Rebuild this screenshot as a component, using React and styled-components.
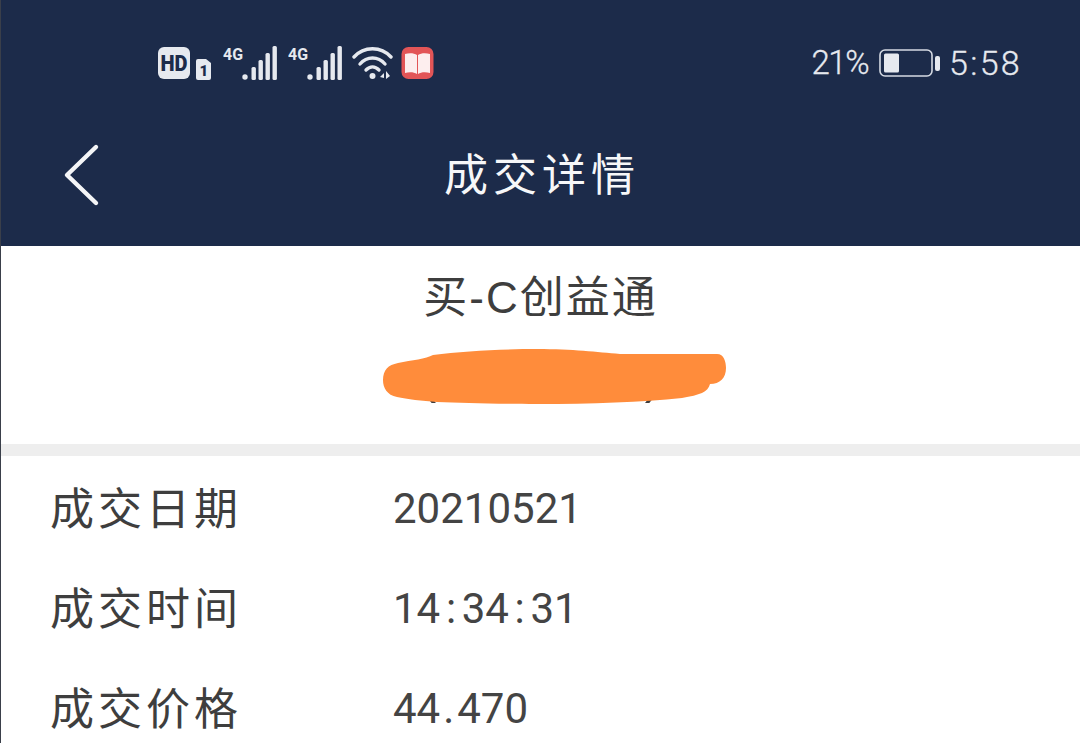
import React from 'react';
import styled, { createGlobalStyle } from 'styled-components';

const CJK = '"Liberation Sans", "Noto Sans CJK SC", sans-serif';

const GlobalStyle = createGlobalStyle`
    html, body {
        margin: 0;
        padding: 0;
        background: #fff;
        font-family: ${CJK};
    }
`;

const Page = styled.div`
    width: 1080px;
    height: 743px;
    overflow: hidden;
    display: flex;
    flex-direction: column;
    background: #fff;
    border-left: 1px solid #3a3f4a;
    box-sizing: border-box;
`;

const Header = styled.header`
    height: 246px;
    flex: none;
    background: #1c2b4a;
    display: flex;
    flex-direction: column;
`;

const StatusBar = styled.div`
    height: 125px;
    box-sizing: border-box;
    padding: 0 58px 0 157px;
    display: flex;
    align-items: center;
    justify-content: space-between;
    color: #e6e9ef;
`;

const StatusGroup = styled.div`
    display: flex;
    align-items: center;
`;

const StatusText = styled.span`
    font-family: "Roboto", "Liberation Sans", sans-serif;
    font-size: ${p => p.$size || 34}px;
    font-weight: 300;
    -webkit-text-stroke: 0.3px #e6e9ef;
    letter-spacing: ${p => p.$spacing || 0}px;
    margin-left: ${p => p.$left || 0}px;
`;

const Icon = styled.svg`
    display: block;
    flex: none;
    margin-left: ${p => p.$left || 0}px;
`;

const NavBar = styled.div`
    flex: 1;
    position: relative;
    display: flex;
    align-items: center;
    justify-content: center;
    padding-bottom: 20px;
`;

const BackIcon = styled.svg`
    position: absolute;
    left: 60px;
    top: 17px;
`;

const NavTitle = styled.h1`
    margin: 0 0 0 3px;
    font-size: 44px;
    line-height: 60px;
    font-weight: 400;
    letter-spacing: 5px;
    color: #f6f7f9;
`;

const Summary = styled.section`
    height: 172px;
    flex: none;
    position: relative;
    display: flex;
    flex-direction: column;
    align-items: center;
    padding-top: 26px;
    border-bottom: 12px solid #eeeeee;
`;

const SummaryTitle = styled.div`
    font-size: 44px;
    line-height: 52px;
    letter-spacing: 2px;
    color: #3e3e3e;
`;

const SummaryCode = styled.div`
    width: 242px;
    margin-top: 26px;
    display: flex;
    justify-content: space-between;
    font-size: 50px;
    line-height: 52px;
    color: #3e3e3e;
`;

const Blob = styled.svg`
    position: absolute;
    left: 381px;
    top: 102px;
`;

const Rows = styled.div`
    display: flex;
    flex-direction: column;
    padding: 2px 0 0 49px;
`;

const Row = styled.div`
    height: 100px;
    display: flex;
    align-items: center;
    color: #3e3e3e;
`;

const Label = styled.div`
    width: 343px;
    font-size: 44px;
    letter-spacing: 4px;
    padding-bottom: 5px;
`;

const Value = styled.div`
    font-family: "Roboto", "Liberation Sans", sans-serif;
    font-size: 42px;
    color: #444444;
`;

const Sep = styled.span`
    display: inline-block;
    text-align: center;
    width: ${p => p.$width}px;
`;

const Signal = ({ left }) => (
    <Icon $left={left} width="56" height="36" viewBox="0 0 56 36">
        <text x="0" y="15" fontSize="17" fontWeight="700" textLength="20" lengthAdjust="spacingAndGlyphs" fontFamily="Roboto, sans-serif" fill="#e6e9ef">4G</text>
        <g fill="#e6e9ef">
            <circle cx="22" cy="32" r="2.7" />
            <rect x="28.5" y="22" width="4.4" height="13" rx="1.5" />
            <rect x="35.5" y="15" width="4.4" height="20" rx="1.5" />
            <rect x="42.5" y="8" width="4.4" height="27" rx="1.5" />
            <rect x="49.5" y="1" width="4.4" height="34" rx="1.5" />
        </g>
    </Icon>
);

const rows = [
    ['成交日期', '20210521'],
    ['成交时间', '14:34:31'],
    ['成交价格', '44.470'],
];

// the colon and the dot are wider in the phone's font than in any installed one
const renderValue = value =>
    value.split(/([:.])/).map((part, i) => {
        if (part === ':') return <Sep key={i} $width={21.5}>:</Sep>;
        if (part === '.') return <Sep key={i} $width={17}>.</Sep>;
        return part;
    });

export default function App() {
    return (
        <Page>
            <GlobalStyle />
            <Header>
                <StatusBar>
                    <StatusGroup>
                        <Icon width="54" height="34" viewBox="0 0 54 34">
                            <rect x="0" y="1" width="32" height="32" rx="6" fill="#e6e9ef" />
                            <text x="2.5" y="24.5" fontSize="22" fontWeight="900" textLength="27" lengthAdjust="spacingAndGlyphs" fontFamily="Roboto, sans-serif" fill="#1c2b4a">HD</text>
                            <path d="M40 13h8l5 4v15a2 2 0 0 1-2 2H40a2 2 0 0 1-2-2V15a2 2 0 0 1 2-2z" fill="#e6e9ef" />
                            <text x="41.5" y="30" fontSize="15" fontWeight="900" fontFamily="Roboto, sans-serif" fill="#1c2b4a">1</text>
                        </Icon>
                        <Signal left={11} />
                        <Signal left={9} />
                        <Icon $left={8} width="42" height="34" viewBox="0 0 42 34">
                            <g fill="none" stroke="#e6e9ef" strokeWidth="3.4" strokeLinecap="round">
                                <path d="M2 11C12 0 29 0 39 11" />
                                <path d="M8 18C15 10 26 10 33 18" />
                                <path d="M14 24C18 20 23 20 27 24" />
                            </g>
                            <circle cx="20.5" cy="30" r="3" fill="#e6e9ef" />
                            <path d="M32 27l-4 4 4 1zM34 25l4 5-4 3z" fill="#e6e9ef" />
                        </Icon>
                        <Icon $left={7} width="34" height="34" viewBox="0 0 34 34">
                            <rect x="0.5" y="1" width="32" height="32" rx="7" fill="#e25557" />
                            <path d="M4 8c4-1 9-1 12 1v19c-3-2-8-2-12-1zM29 8c-4-1-9-1-12 1v19c3-2 8-2 12-1z" fill="#fdeeee" />
                        </Icon>
                    </StatusGroup>
                    <StatusGroup>
                        <StatusText $size={33} $spacing={-1.5}>21%</StatusText>
                        <Icon $left={11} width="62" height="30" viewBox="0 0 62 30">
                            <rect x="1" y="2" width="52" height="26" rx="5" fill="none" stroke="#d5dae3" strokeWidth="1.6" />
                            <rect x="5" y="5.5" width="15" height="19" rx="1.5" fill="#e6e9ef" />
                            <rect x="56" y="8" width="5" height="15" rx="2" fill="#e6e9ef" />
                        </Icon>
                        <StatusText $left={8} $spacing={2.3}>5:58</StatusText>
                    </StatusGroup>
                </StatusBar>
                <NavBar>
                    <BackIcon width="40" height="66" viewBox="0 0 40 66">
                        <path d="M35 5L6 33l29 28" fill="none" stroke="#f4f5f7" strokeWidth="4.4" strokeLinecap="round" strokeLinejoin="round" />
                    </BackIcon>
                    <NavTitle>成交详情</NavTitle>
                </NavBar>
            </Header>
            <Summary>
                <SummaryTitle>买-C创益通</SummaryTitle>
                <SummaryCode>
                    <span>(</span>
                    <span>)</span>
                </SummaryCode>
                <Blob width="346" height="60" viewBox="0 0 346 60">
                    <path
                        d="M16 15C30 12 44 11 51 7c30-4 70-6 104-6 36 0 60 3 83 5h97c7 0 9 8 9 14 0 10-6 16-16 16-2 8-10 11-28 14-40 4-90 6-145 6-45 0-75-1-100-2-15-1-30-3-40-5C5 47 1 40 1 32 1 22 6 17 16 15Z"
                        fill="#ff8c3b"
                    />
                </Blob>
            </Summary>
            <Rows>
                {rows.map(([label, value]) => (
                    <Row key={label}>
                        <Label>{label}</Label>
                        <Value>{renderValue(value)}</Value>
                    </Row>
                ))}
            </Rows>
        </Page>
    );
}
